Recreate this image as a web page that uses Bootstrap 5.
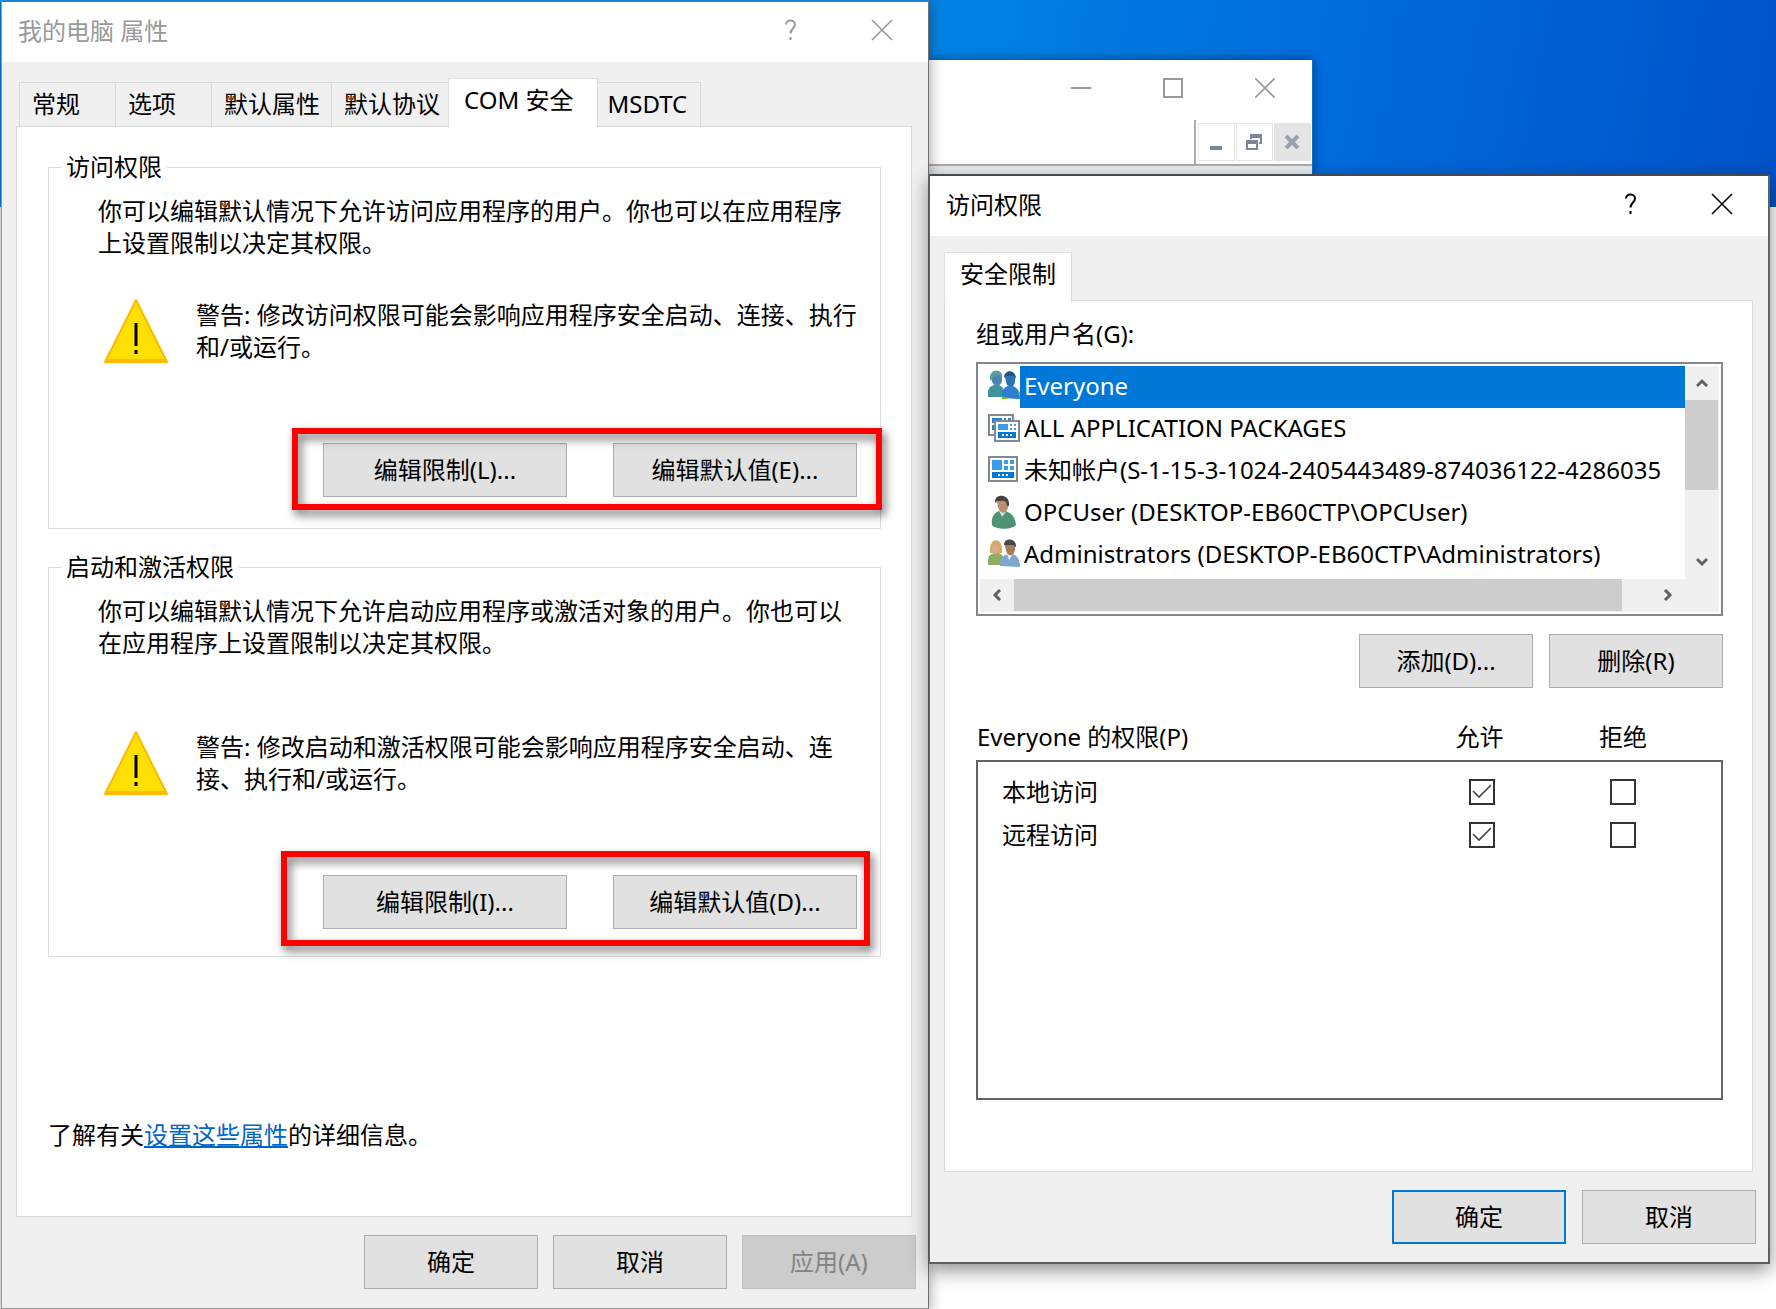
<!DOCTYPE html>
<html lang="zh-CN">
<head>
<meta charset="utf-8">
<meta name="viewport" content="width=device-width, initial-scale=1">
<title>我的电脑 属性</title>
<link href="https://cdn.jsdelivr.net/npm/bootstrap@5.3.0/dist/css/bootstrap.min.css" rel="stylesheet">
<style>
  body { font-family: "Noto Sans", "Noto Sans CJK SC", sans-serif; font-size: 24px; line-height: 32px; color: #000; background: #fff; }
  .desktop { min-height: 100vh; min-width: 1500px; overflow: hidden; padding-left: 1px;
    background: linear-gradient(100deg, #0084e4 50%, #0070de 70%, #0064d6 82%, #0052c9 100%) 0 0 / 100% 207px no-repeat, #fff; }
  .win { background: #f0f0f0; border: 1px solid #9a9a9a; }
  .win-left { flex: 927 1 0; min-width: 0; border-top: 2px solid #1883d7; border-right-color: #707070; box-shadow: 0 4px 14px rgba(0,0,0,.4); position: relative; z-index: 1; }
  .side { flex: 848 1 0; min-width: 0; padding-top: 60px; }
  .win-back { width: 384px; height: 114px; background: #fff; border-right: 1px solid #0a6fc9; box-shadow: 0 0 10px rgba(0,0,0,.45); }
  .win-right { position: relative; z-index: 2; margin-right: 6px; border: 2px solid #606060; border-left-width: 1px; border-top-color: #404a55; box-shadow: 0 6px 18px rgba(0,0,0,.45); }
  .titlebar { height: 60px; background: #fff; padding-left: 16px; }
  .win-right .titlebar { padding-right: 1px; }
  .titlebar h1 { font-size: 24px; line-height: 32px; font-weight: 400; margin: 13px 0 0; }
  .cap { border: 0; background: none; padding: 0; width: 91px; height: 56px; display: flex; align-items: center; justify-content: center; color: inherit; }
  .muted-title { color: #999; }
  .win-left .win-body { padding: 16px 16px 19px 14px; }
  .win-right .win-body { padding: 16px 15px 18px 14px; }
  .tabs { border: 0; padding-left: 3px; align-items: flex-end; flex-wrap: nowrap; }
  .tabs .nav-link { height: 44px; margin: 0; padding: 0 11px 2px 12px; min-width: 96px; border: 1px solid #d9d9d9; border-right: 0; border-bottom: 0; border-radius: 0; background: #f0f0f0; color: #000; text-align: left; white-space: nowrap; }
  .tabs .nav-link.tight { padding-right: 8px; }
  .tabs .nav-link.active { height: 50px; margin-bottom: -2px; padding: 0 15px 8px; border-right: 1px solid #d9d9d9; background: #fff; position: relative; z-index: 1; }
  .win-left .tabs .nav-link.active { padding-right: 24px; }
  .tabs .nav-link.final { padding: 0 13px 2px 9px; border-left: 0; border-right: 1px solid #d9d9d9; }
  .pane { background: #fff; border: 1px solid #d9d9d9; }
  .pane-main { padding: 24px 30px 65px 31px; }
  .group { border: 1px solid #dcdcdc; padding: 0 23px 31px 49px; min-width: 0; }
  .group + .group { margin-top: 22px; padding-bottom: 27px; }
  .group legend { float: none; width: auto; font-size: 24px; line-height: 32px; margin: 0 0 12px -37px; padding: 0 5px; }
  .group p { margin: 0; }
  .warn { gap: 28px; padding-left: 6px; margin: 40px 0 80px; }
  .group + .group .warn { margin-top: 72px; }
  .btnrow { display: flex; width: fit-content; margin-left: auto; gap: 46px; position: relative; }
  .winbtn { height: 54px; width: 174px; padding: 0; font-size: 24px; line-height: 32px; border: 1px solid #adadad; border-radius: 0; background: #e1e1e1; color: #000; }
  .winbtn:hover { background: #e5f1fb; border-color: #0078d7; }
  .winbtn:disabled { background: #ccc; border-color: #bfbfbf; color: #838383; opacity: 1; }
  .winbtn.wide { width: 244px; }
  .winbtn.primary { border: 2px solid #0078d7; }
  .marker { position: absolute; pointer-events: none; border: 6px solid #f00; inset: -15px -25px -13px -31px; filter: drop-shadow(3px 5px 5px rgba(0,0,0,.6)); }
  .marker.low { inset: -24px -13px -17px -42px; }
  .more { margin: 162px 0 0; }
  .more a { color: #0066cc; }
  .foot { margin: 18px -4px 0 0; gap: 15px; }
  .win-right .foot { gap: 16px; margin-right: -3px; }
  .win-right .tabs { padding-left: 0; }
  .pane-acl { padding: 17px 29px 71px 31px; }
  .listbox { border: 2px solid #828790; padding: 2px; margin-top: 12px; }
  .listbox .list-group { padding-left: 8px; height: 213px; min-width: 0; overflow: hidden; }
  .listbox .list-group-item { display: flex; height: 42px; flex: none; padding: 0; border: 0; background: none; color: #000; font-size: 24px; line-height: 40px; }
  .listbox .list-group-item svg { flex: none; margin-top: 2px; }
  .listbox .list-group-item span { flex: 1 1 0; min-width: 0; overflow: hidden; white-space: nowrap; padding-left: 4px; }
  .listbox .list-group-item.active span { background: #0078d7; color: #fff; }
  .vbar { width: 34px; background: #f0f0f0; color: #606060; }
  .vbar .thumb { height: 90px; width: 33px; background: #cdcdcd; }
  .hbar { height: 33px; background: #f0f0f0; color: #606060; padding-right: 34px; }
  .hbar .thumb { flex: 606 1 0; height: 32px; background: #cdcdcd; }
  .hbar .rest { flex: 29 1 0; }
  .arrow { width: 34px; height: 34px; flex: none; display: flex; align-items: center; justify-content: center; }
  .hbar .arrow { height: 32px; }
  .addrow { margin-top: 18px; }
  .acl { width: 100%; margin-top: 32px; border-collapse: collapse; table-layout: fixed; }
  .acl th { font-weight: 400; height: 41px; padding: 0 0 7px; vertical-align: middle; }
  .acl th:nth-child(2) { padding-right: 5px; }
  .acl tbody { border: 2px solid #646464; }
  .acl td { height: 44px; padding: 0; text-align: center; vertical-align: middle; }
  .acl td:first-child { padding-left: 24px; text-align: left; }
  .acl tr.first td { height: 52px; padding-top: 8px; }
  .acl tr.blank td { height: 242px; }
  .acl .form-check-input { display: block; width: 26px; height: 26px; margin: 0 auto; border: 2px solid #333; border-radius: 0; background-color: #fff; opacity: 1; }
  .acl .form-check-input:checked { background-color: #fff; background-size: 22px 22px; background-image: url("data:image/svg+xml,%3csvg xmlns='http://www.w3.org/2000/svg' viewBox='0 0 22 22'%3e%3cpath d='M2 10l6 6L20 4' fill='none' stroke='%23444' stroke-width='1.6'/%3e%3c/svg%3e"); }
  .back-caps { height: 60px; color: #999; padding: 0 37px 4px 0; gap: 72px; }
  .mdi-row { height: 46px; border-bottom: 2px solid #adadad; }
  .mdi { border-left: 2px solid #adadad; padding: 3px 1px 0 2px; gap: 1px; }
  .mdi button { width: 37px; height: 38px; padding: 0; border: 1px solid #e3e3e3; background: #fff; display: flex; align-items: center; justify-content: center; }
  .mdi button:last-child { background: #e5e5e5; }
  .back-strip { height: 8px; background: #ececee; }
</style>
<script src="https://cdn.jsdelivr.net/npm/bootstrap@5.3.0/dist/js/bootstrap.bundle.min.js"></script>
</head>
<body>
<main class="desktop d-flex align-items-start">

  <section class="win win-left" aria-label="我的电脑 属性">
    <header class="titlebar muted-title d-flex align-items-start justify-content-between">
      <h1>我的电脑 属性</h1>
      <div class="d-flex">
        <button class="cap" type="button" aria-label="帮助"><svg width="14" height="22" viewBox="0 0 14 22" fill="none" stroke="currentColor" stroke-width="2"><path d="M2 5.500C2 0 11 .5 11 5.500C11 9.500 6.500 9.500 6.500 14.500"/><path d="M6.500 18v3"/></svg></button>
        <button class="cap" type="button" aria-label="关闭"><svg width="22" height="22" viewBox="0 0 22 22" stroke="currentColor" stroke-width="1.600"><path d="M1 1l20 20M21 1L1 21"/></svg></button>
      </div>
    </header>
    <div class="win-body">
      <nav class="nav nav-tabs tabs">
        <button class="nav-link" type="button">常规</button>
        <button class="nav-link" type="button">选项</button>
        <button class="nav-link" type="button">默认属性</button>
        <button class="nav-link tight" type="button">默认协议</button>
        <button class="nav-link active" type="button">COM 安全</button>
        <button class="nav-link final" type="button">MSDTC</button>
      </nav>
      <div class="pane pane-main">
        <fieldset class="group">
          <legend>访问权限</legend>
          <p>你可以编辑默认情况下允许访问应用程序的用户。你也可以在应用程序上设置限制以决定其权限。</p>
          <div class="warn d-flex align-items-start">
            <svg class="flex-shrink-0" width="64" height="64" viewBox="0 0 64 64"><path d="M32 1L63 63H1z" fill="#ffe000" stroke="#ffb900" stroke-width="2"/><path d="M1 61.500h62" stroke="#ffb900" stroke-width="3"/><path d="M30.500 24h3v23h-3zM30.500 51h3v4h-3z"/></svg>
            <p>警告: 修改访问权限可能会影响应用程序安全启动、连接、执行和/或运行。</p>
          </div>
          <div class="btnrow">
            <button class="btn winbtn wide" type="button">编辑限制(L)...</button>
            <button class="btn winbtn wide" type="button">编辑默认值(E)...</button>
            <div class="marker"></div>
          </div>
        </fieldset>
        <fieldset class="group">
          <legend>启动和激活权限</legend>
          <p>你可以编辑默认情况下允许启动应用程序或激活对象的用户。你也可以在应用程序上设置限制以决定其权限。</p>
          <div class="warn d-flex align-items-start">
            <svg class="flex-shrink-0" width="64" height="64" viewBox="0 0 64 64"><path d="M32 1L63 63H1z" fill="#ffe000" stroke="#ffb900" stroke-width="2"/><path d="M1 61.500h62" stroke="#ffb900" stroke-width="3"/><path d="M30.500 24h3v23h-3zM30.500 51h3v4h-3z"/></svg>
            <p>警告: 修改启动和激活权限可能会影响应用程序安全启动、连接、执行和/或运行。</p>
          </div>
          <div class="btnrow">
            <button class="btn winbtn wide" type="button">编辑限制(I)...</button>
            <button class="btn winbtn wide" type="button">编辑默认值(D)...</button>
            <div class="marker low"></div>
          </div>
        </fieldset>
        <p class="more">了解有关<a href="#">设置这些属性</a>的详细信息。</p>
      </div>
      <div class="foot d-flex justify-content-end">
        <button class="btn winbtn" type="button">确定</button>
        <button class="btn winbtn" type="button">取消</button>
        <button class="btn winbtn" type="button" disabled>应用(A)</button>
      </div>
    </div>
  </section>

  <div class="side">
    <div class="win-back">
      <div class="back-caps d-flex justify-content-end align-items-center">
        <svg width="20" height="20" viewBox="0 0 20 20" stroke="currentColor" stroke-width="2"><path d="M0 10h20"/></svg>
        <svg width="20" height="20" viewBox="0 0 20 20" fill="none" stroke="currentColor" stroke-width="2"><path d="M1 1h18v18H1z"/></svg>
        <svg width="20" height="20" viewBox="0 0 20 20" stroke="currentColor" stroke-width="1.600"><path d="M0 0l20 20M20 0L0 20"/></svg>
      </div>
      <div class="mdi-row d-flex justify-content-end">
        <div class="mdi d-flex">
          <button type="button" aria-label="最小化"><svg width="16" height="16" viewBox="0 0 16 16"><path d="M2 12h12v4H2z" fill="#7a869a"/></svg></button>
          <button type="button" aria-label="还原"><svg width="18" height="18" viewBox="0 0 18 18" fill="#7a869a"><path d="M5 1h12v10h-3V9h1V5H7v1H5zM1 7h12v10H1zM3 11v4h8v-4z" fill-rule="evenodd"/></svg></button>
          <button type="button" aria-label="关闭"><svg width="16" height="16" viewBox="0 0 16 16"><path d="M2 2l12 12M14 2L2 14" stroke="#99a1b3" stroke-width="4"/></svg></button>
        </div>
      </div>
      <div class="back-strip"></div>
    </div>

    <section class="win win-right" aria-label="访问权限">
      <header class="titlebar d-flex align-items-start justify-content-between">
        <h1>访问权限</h1>
        <div class="d-flex">
          <button class="cap" type="button" aria-label="帮助"><svg width="14" height="22" viewBox="0 0 14 22" fill="none" stroke="currentColor" stroke-width="2"><path d="M2 5.500C2 0 11 .5 11 5.500C11 9.500 6.500 9.500 6.500 14.500"/><path d="M6.500 18v3"/></svg></button>
          <button class="cap" type="button" aria-label="关闭"><svg width="22" height="22" viewBox="0 0 22 22" stroke="currentColor" stroke-width="1.600"><path d="M1 1l20 20M21 1L1 21"/></svg></button>
        </div>
      </header>
      <div class="win-body">
        <nav class="nav nav-tabs tabs">
          <button class="nav-link active" type="button">安全限制</button>
        </nav>
        <div class="pane pane-acl">
          <div id="groups-label">组或用户名(G):</div>
          <div class="listbox">
            <div class="d-flex">
              <div class="list-group list-group-flush flex-grow-1" aria-labelledby="groups-label">
                <a href="#" class="list-group-item active"><svg width="32" height="36" viewBox="0 0 32 36"><path d="M0 29V24c0-4 3-6 6-7h5c4 2 6 5 6 12z" fill="#42929a"/><path d="M3 8c0-7 11-7 11 0v5c-1 6-9 6-10 0z" fill="#4a86ad"/><path d="M2 11c-1-11 13-11 12 0l-2-4-6 1-3 5z" fill="#5ba0a6"/><path d="M14 30c-1-7 2-11 6-12h5c5 2 7 6 7 13z" fill="#2f7fd0"/><path d="M17 9c0-6 10-6 10 0v5c-1 6-8 6-9 0z" fill="#2d72ae"/><path d="M16 10c0-9 12-9 12 1l-2-3h-8z" fill="#1f558c"/><path d="M14 30h5M30 25h2" stroke="#7fba00" stroke-width="2"/></svg><span>Everyone</span></a>
                <a href="#" class="list-group-item"><svg width="32" height="36" viewBox="0 0 32 36"><path d="M1 5h24v20H1z" fill="#fff" stroke="#828790" stroke-width="2"/><path d="M4 8h10v5H4zM16 8h2v3h-2zM20 8h3v3h-3zM4 15h4v5H4z" fill="#1a88e0"/><path d="M7 11h24v20H7z" fill="#fff" stroke="#828790" stroke-width="2"/><path d="M10 14h10v6H10zM22 14h2v2h-2zM26 14h2v2h-2zM22 18h2v2h-2zM26 18h2v2h-2z" fill="#3d9bec"/><path d="M10 22h18v6H10z" fill="#0078d7"/><path d="M14 25h2M18 25h2M22 25h2" stroke="#fff" stroke-width="2"/></svg><span>ALL APPLICATION PACKAGES</span></a>
                <a href="#" class="list-group-item"><svg width="32" height="36" viewBox="0 0 32 36"><path d="M1 5h28v24H1z" fill="#fff" stroke="#828790" stroke-width="2"/><path d="M4 8h10v10H4zM16 8h4v4h-4zM22 8h4v4h-4zM16 14h4v4h-4zM22 14h4v4h-4z" fill="#3d9bec"/><path d="M4 20h22v6H4z" fill="#0078d7"/><path d="M10 23h2M14 23h2M18 23h2" stroke="#fff" stroke-width="2"/></svg><span>未知帐户(S-1-15-3-1024-2405443489-874036122-4286035</span></a>
                <a href="#" class="list-group-item"><svg width="32" height="36" viewBox="0 0 32 36"><path d="M4 31c-1-8 2-12 7-14h6c7 2 10 6 11 14-4 5-20 5-24 0z" fill="#4c9473"/><path d="M11 17l3 6 4-5z" fill="#cfe0d6"/><path d="M9 7c0-6 11-6 11 1v5c-1 7-8 8-10 0z" fill="#b98e6e"/><path d="M7 7c1-8 15-7 14 4-1 3-2 0-3-3-2-2-6-1-9-1l-1 2z" fill="#43403e"/></svg><span>OPCUser (DESKTOP-EB60CTP\OPCUser)</span></a>
                <a href="#" class="list-group-item"><svg width="32" height="36" viewBox="0 0 32 36"><path d="M0 29V24c0-4 3-6 6-7h5c4 2 6 5 6 12z" fill="#8fac63"/><path d="M2 17c-2-17 14-17 12 0z" fill="#cfae62"/><path d="M4 9l6-1 1 6c-1 5-6 5-7 0z" fill="#dca989"/><path d="M12 30c0-7 3-11 8-12h5c5 2 7 6 7 13z" fill="#7fa7d2"/><path d="M19 18l2 6 4-6z" fill="#e5edf5"/><path d="M17 10c0-6 10-6 10 0v4c-1 7-8 7-9 0z" fill="#a87b59"/><path d="M16 9c0-8 13-7 12 2l-3-2h-9z" fill="#4a4744"/></svg><span>Administrators (DESKTOP-EB60CTP\Administrators)</span></a>
              </div>
              <div class="vbar d-flex flex-column flex-shrink-0">
                <div class="arrow"><svg width="12" height="10" viewBox="0 0 12 10" fill="none" stroke="currentColor" stroke-width="3"><path d="M1 8l5-5 5 5"/></svg></div>
                <div class="thumb"></div>
                <div class="arrow mt-auto"><svg width="12" height="10" viewBox="0 0 12 10" fill="none" stroke="currentColor" stroke-width="3"><path d="M1 2l5 5 5-5"/></svg></div>
              </div>
            </div>
            <div class="hbar d-flex">
              <div class="arrow"><svg width="10" height="12" viewBox="0 0 10 12" fill="none" stroke="currentColor" stroke-width="3"><path d="M8 1L3 6l5 5"/></svg></div>
              <div class="thumb"></div><div class="rest"></div>
              <div class="arrow"><svg width="10" height="12" viewBox="0 0 10 12" fill="none" stroke="currentColor" stroke-width="3"><path d="M2 1l5 5-5 5"/></svg></div>
            </div>
          </div>
          <div class="addrow d-flex justify-content-end gap-3">
            <button class="btn winbtn" type="button">添加(D)...</button>
            <button class="btn winbtn" type="button">删除(R)</button>
          </div>
          <table class="acl">
            <colgroup><col><col style="width:144px"><col style="width:138px"><col style="width:30px"></colgroup>
            <thead><tr><th>Everyone 的权限(P)</th><th class="text-center">允许</th><th class="text-center">拒绝</th><th></th></tr></thead>
            <tbody>
              <tr class="first"><td>本地访问</td><td><input class="form-check-input" type="checkbox" checked aria-label="本地访问 允许"></td><td><input class="form-check-input" type="checkbox" aria-label="本地访问 拒绝"></td><td></td></tr>
              <tr><td>远程访问</td><td><input class="form-check-input" type="checkbox" checked aria-label="远程访问 允许"></td><td><input class="form-check-input" type="checkbox" aria-label="远程访问 拒绝"></td><td></td></tr>
              <tr class="blank"><td colspan="4"></td></tr>
            </tbody>
          </table>
        </div>
        <div class="foot d-flex justify-content-end">
          <button class="btn winbtn primary" type="button">确定</button>
          <button class="btn winbtn" type="button">取消</button>
        </div>
      </div>
    </section>
  </div>
</main>
</body>
</html>
